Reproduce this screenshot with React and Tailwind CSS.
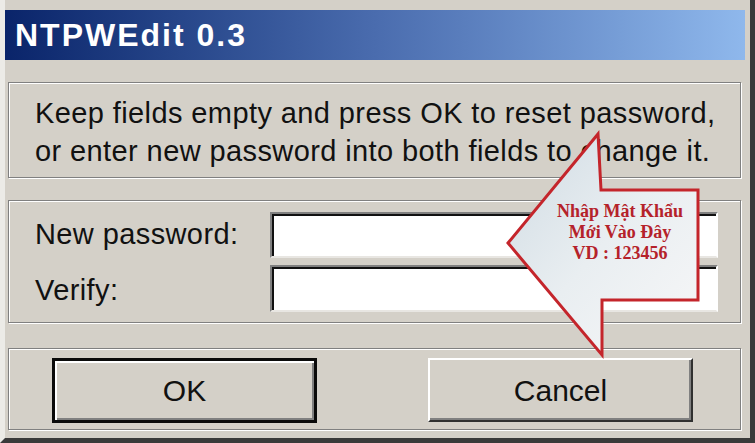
import React from "react";

const font = { fontFamily: '"Liberation Sans", Arial, sans-serif' };

const Panel = ({ className, children }) => (
    <div
        className={`ml-[3px] mr-[9px] border border-[#808080] shadow-[1px_1px_0_#ffffff,inset_1px_1px_0_#ffffff] ${className}`}
    >
        {children}
    </div>
);

const Field = () => (
    <div className="bg-white border-2 border-t-[#808080] border-l-[#808080] border-r-white border-b-[#e8e6e2] shadow-[inset_2px_2px_0_#111111]" />
);

export default function App() {
    return (
        <div
            className="relative w-[755px] h-[443px] overflow-hidden bg-[#d4d0c8] border-l-[5px] border-l-[#ecebe7] border-r-[5px] border-r-[#3a3a3a] border-b-[5px] border-b-[#3a3a3a] pt-[10px] text-[#111111]"
            style={font}
        >
            {/* Title bar */}
            <div className="mr-[5px] h-[50px] bg-gradient-to-r from-[#0a246a] via-[#4a6cae] to-[#8fb8ec] flex items-center pl-[10px]">
                <span className="text-white font-bold text-[32px] tracking-[2px] leading-none">NTPWEdit 0.3</span>
            </div>

            {/* Info text */}
            <Panel className="mt-[22px] h-[96px] pl-[26px] pt-[11px]">
                <p className="text-[29px] leading-[38px] tracking-[0.4px] whitespace-nowrap">
                    Keep fields empty and press OK to reset password,
                    <br />
                    or enter new password into both fields to change it.
                </p>
            </Panel>

            {/* Fields */}
            <Panel className="mt-[22px] h-[123px] pl-[26px] pr-[22px] pt-[11px]">
                <div className="grid grid-cols-[235px_1fr] grid-rows-[46px_47px] gap-y-[7px]">
                    <div className="flex items-center text-[29px] tracking-[0.4px]">New password:</div>
                    <Field />
                    <div className="flex items-center text-[29px] tracking-[0.4px] pt-[4px]">Verify:</div>
                    <Field />
                </div>
            </Panel>

            {/* Buttons */}
            <Panel className="mt-[25px] h-[82px] pt-[9px] pl-[43px] flex items-start gap-[111px]">
                <button className="w-[265px] h-[65px] border-[3px] border-[#0a0a0a] shadow-[inset_2px_2px_0_#ffffff,inset_-2px_-2px_0_#808080] bg-[#d4d0c8] text-[30px] flex items-center justify-center">
                    OK
                </button>
                <button className="w-[265px] h-[64px] border-[2px] border-t-white border-l-white border-r-[#303030] border-b-[#303030] shadow-[inset_-2px_-2px_0_#808080] bg-[#d4d0c8] text-[30px] flex items-center justify-center">
                    Cancel
                </button>
            </Panel>

            {/* Annotation arrow */}
            <svg className="absolute left-[-5px] top-0 pointer-events-none" width="755" height="443" viewBox="0 0 755 443">
                <defs>
                    <linearGradient id="arrowFill" x1="0" y1="0" x2="1" y2="1">
                        <stop offset="0" stopColor="#cfdbe3" />
                        <stop offset="0.5" stopColor="#e9eef1" />
                        <stop offset="1" stopColor="#f7f7f8" />
                    </linearGradient>
                </defs>
                <polygon
                    points="508,243 598,134 601,190 698,190 698,300 602,300 602,355"
                    fill="url(#arrowFill)"
                    stroke="#c4252b"
                    strokeWidth="3"
                    strokeLinejoin="miter"
                />
            </svg>
            <div
                className="absolute left-[545px] top-[201px] w-[140px] text-center text-[#b5222a] font-bold text-[18px] leading-[21px]"
                style={{ fontFamily: '"Liberation Serif", "Times New Roman", serif' }}
            >
                Nhập Mật Khẩu
                <br />
                Mới Vào Đây
                <br />
                VD : 123456
            </div>
        </div>
    );
}
